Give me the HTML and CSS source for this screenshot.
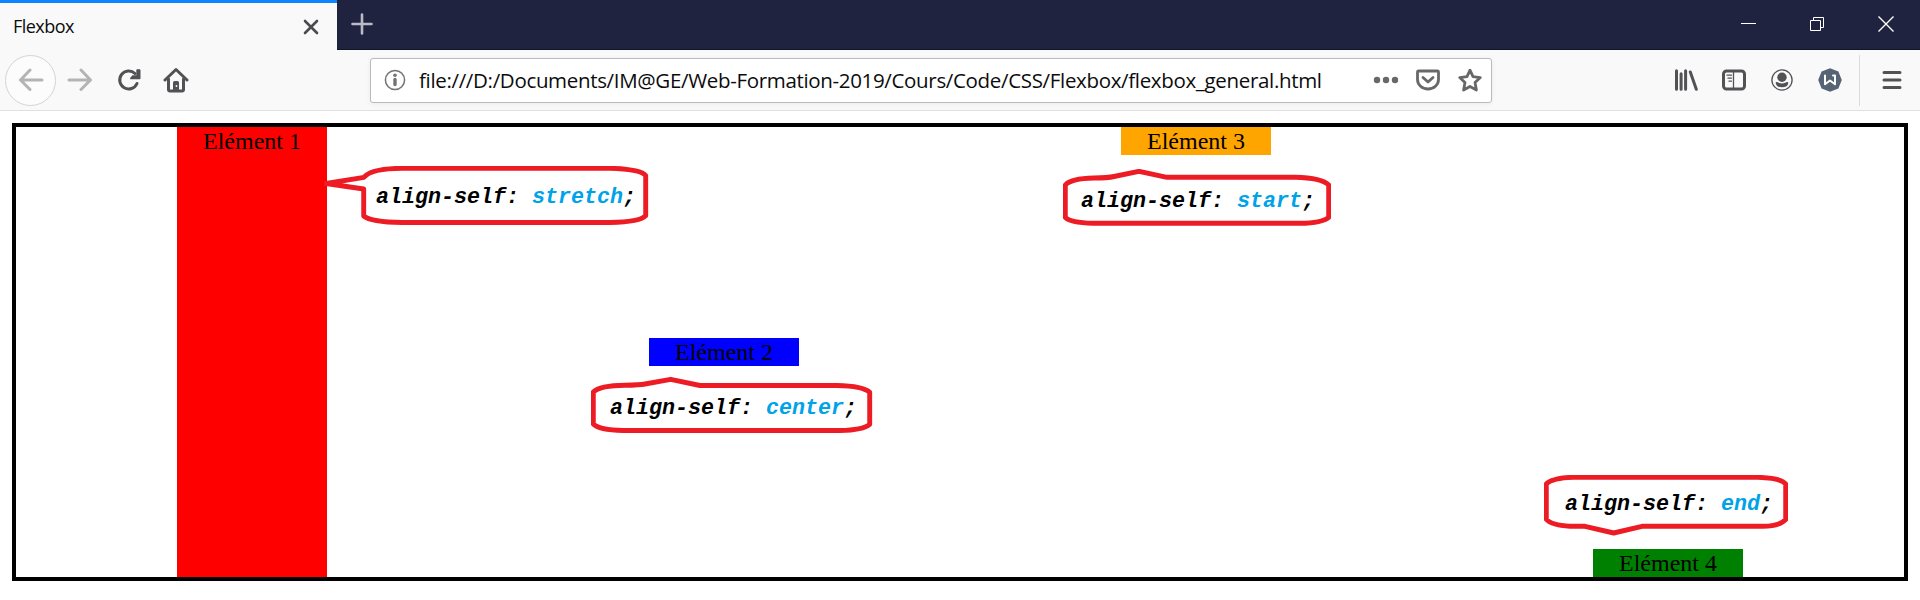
FILE: index.html
```html
<!DOCTYPE html>
<html lang="fr">
<head>
<meta charset="utf-8">
<title>Flexbox</title>
<link rel="stylesheet" href="styles.css">
</head>
<body>
<header class="tabstrip">
  <div class="tab">
    <span class="tab-title">Flexbox</span>
    <svg class="tab-close" width="16" height="16" viewBox="0 0 16 16"><path d="M2 2l12 12M14 2L2 14"/></svg>
  </div>
  <svg class="new-tab" width="22" height="22" viewBox="0 0 22 22"><path d="M11 1.500v19M1.500 11h19"/></svg>
  <div class="window-controls">
    <svg width="69" height="49" viewBox="0 0 69 49"><path d="M28 23.500h15"/></svg>
    <svg width="69" height="49" viewBox="0 0 69 49"><path d="M28.500 20.500h10v10h-10zM31.500 20v-2.500h10v10H39"/></svg>
    <svg width="69" height="49" viewBox="0 0 69 49"><path class="thick" d="M27.500 16.500l15 15M42.500 16.500l-15 15"/></svg>
  </div>
</header>
<nav class="toolbar">
  <div class="nav-buttons">
    <span class="back"><svg width="26" height="24" viewBox="0 0 26 24"><path d="M24 12H2.500M12 2L2.500 12l9.500 9.500"/></svg></span>
    <svg class="faded forward" width="26" height="24" viewBox="0 0 26 24"><path d="M2 12h21.500M14 2l9.500 10L14 21.500"/></svg>
    <svg class="reload" width="24" height="24" viewBox="0 0 24 24"><path d="M20 15.500A9 9 0 1 1 18 5.500"/><path class="fill" d="M22.500 1.200c.7 0 1 .5 1 1v8c0 .6-.4 1-1 1h-8.200c-1.300 0-1.600-1-.8-1.800l2-2.200h3.800V2.200c0-.6.6-1 1-1z"/></svg>
    <svg class="home" width="26" height="26" viewBox="0 0 26 26"><path d="M2 13L13 2.500 24 13M5.500 12v10.500q0 1.500 1.500 1.500h12q1.500 0 1.500-1.500V12"/><path class="fill" d="M10 24v-8.500q0-1.500 1.500-1.500h3q1.500 0 1.500 1.500V24z"/><circle class="knob" cx="13.500" cy="19" r=".9"/></svg>
  </div>
  <div class="urlbar">
    <svg class="info" width="22" height="22" viewBox="0 0 22 22"><circle cx="11" cy="11" r="9.600"/><path class="stem" d="M11 10.500v5"/><circle class="dot" cx="11" cy="6.300" r="1.800"/></svg>
    <span class="url">file:///D:/Documents/IM@GE/Web-Formation-2019/Cours/Code/CSS/Flexbox/flexbox_general.html</span>
    <div class="url-actions">
      <svg width="26" height="26" viewBox="0 0 26 26"><g class="fill"><circle cx="4" cy="13" r="3.200"/><circle cx="13" cy="13" r="3.200"/><circle cx="22" cy="13" r="3.200"/></g></svg>
      <svg width="26" height="26" viewBox="0 0 26 26"><path d="M3.500 4h19q1 0 1 1v7.500a10.500 9.500 0 0 1-21 0V5q0-1 1-1zM8 10.500l5 4.500 5-4.500"/></svg>
      <svg width="26" height="26" viewBox="0 0 26 26"><path d="M13 3.200l3 6.500 7.300.9-5.300 5 1.400 7.400-6.400-3.500-6.400 3.500L8 15.600l-5.300-5 7.300-.9z"/></svg>
    </div>
  </div>
  <div class="tools">
    <svg width="24" height="24" viewBox="0 0 24 24"><path d="M2.500 2.800v18.500M7.100 5.800v15.500M11.600 2.800v18.500M16.300 4l6 17.300"/></svg>
    <svg width="24" height="24" viewBox="0 0 24 24"><rect x="1.500" y="3" width="21" height="18" rx="3"/><path class="fine" d="M11.500 3v18M5 7.200h4.500M6 10.200h3.500M7 13.200h2.500"/></svg>
    <svg width="24" height="24" viewBox="0 0 24 24"><circle class="fine" cx="12" cy="12" r="10.100"/><circle class="fill" cx="12" cy="9.200" r="4.700"/><path class="fill" d="M5.700 15q-.2-1 1-.9 1.300.1 2 .7 3.300 1.500 6.600 0 .7-.6 2-.7 1.200-.1 1 .9-.6 4.300-6.300 4.300T5.700 15z"/></svg>
    <svg width="24" height="24" viewBox="0 0 24 24"><path class="badge" d="M12 .2l8.400 3.400L23.800 12l-3.400 8.400L12 23.800l-8.400-3.400L.2 12l3.400-8.400z"/><path class="mark" d="M7 7.500v8.800l5-3.800 5 3.800V7.500h-2"/></svg>
  </div>
  <div class="menu">
    <svg width="20" height="20" viewBox="0 0 20 20"><path d="M2 2.500h16M2 10h16M2 17.500h16"/></svg>
  </div>
</nav>
<main class="page">
  <section class="container">
    <div class="item item-1">Elément 1</div>
    <div class="item item-2">Elément 2</div>
    <div class="item item-3">Elément 3</div>
    <div class="item item-4">Elément 4</div>
  </section>
  <div class="callout callout-1">
    <svg width="326" height="60" viewBox="324 166 326 60"><path d="M326 183.500L364 177.300Q371 168.500 402 168.300H610Q640 169 645.700 175.500V215.700Q640 222 610 222.500H402Q371 222 363.700 216V189Z"/></svg>
    <code>align-self: <b>stretch</b>;</code>
  </div>
  <div class="callout callout-2">
    <svg width="282" height="58" viewBox="591 376 282 58"><path d="M593.300 392Q600 385.500 625 385.300Q640 385 645 384L670.700 379.300L700 385.500H837Q863 386 869.700 392.300V424.300Q863 430 840 430.500H623Q599 430 593.300 424Z"/></svg>
    <code>align-self: <b>center</b>;</code>
  </div>
  <div class="callout callout-3">
    <svg width="268" height="58" viewBox="1063 169 268 58"><path d="M1065.300 185Q1071 178.500 1094 178Q1108 178 1114 176.500L1139 171.300L1167 177.300H1295Q1322 178 1328.700 185V217.300Q1322 223 1300 223.300H1093Q1070 222.500 1065.300 217.300Z"/></svg>
    <code>align-self: <b>start</b>;</code>
  </div>
  <div class="callout callout-4">
    <svg width="244" height="62" viewBox="1544 475 244 62"><path d="M1546.300 484Q1552 478 1573 477.300H1758Q1781 478 1785.700 484V519.300Q1780 526 1763 526.300H1642L1613.700 533L1585 526.300H1570Q1551 525 1546.300 519.300Z"/></svg>
    <code>align-self: <b>end</b>;</code>
  </div>
</main>
</body>
</html>
```
FILE: styles.css
```css
* { box-sizing: border-box; }
body { margin: 0; height: 600px; overflow: hidden; background: #fff; }
svg { display: block; flex: none; fill: none; stroke-linecap: round; stroke-linejoin: round; }

/* Tabs */
.tabstrip {
  display: flex;
  height: 50px;
  background: #202340;
  border-bottom: 1px solid #121429;
}
.tab {
  display: flex;
  align-items: center;
  justify-content: space-between;
  width: 337px;
  height: 50px;
  padding: 0 18px 0 13px;
  background: #f9f9fa;
  border-top: 3px solid #0a84ff;
}
.tab-title { padding-bottom: 2px; font: 18px/24px "Open Sans", sans-serif; letter-spacing: -0.55px; color: #0c0c0d; }
.tab-close { stroke: #4a4a4f; stroke-width: 2.6; }
.new-tab { margin: 13px 0 0 14px; stroke: #b9bac8; stroke-width: 2.6; }
.window-controls { display: flex; margin-left: auto; }
.window-controls svg { stroke: #fff; stroke-width: 1; stroke-linecap: butt; stroke-linejoin: miter; }
.window-controls .thick { stroke-width: 1.4; }

/* Navigation bar */
.toolbar {
  display: flex;
  align-items: center;
  height: 61px;
  background: #f9f9fa;
  border-bottom: 1px solid #e0e0e1;
}
.toolbar svg { stroke: #525255; stroke-width: 3; }
.toolbar .fill { fill: #525255; stroke: none; }
.nav-buttons { display: flex; align-items: center; width: 370px; padding-left: 5px; }
.back {
  display: flex;
  align-items: center;
  justify-content: center;
  width: 51px;
  height: 51px;
  border: 1px solid #d4d4d5;
  border-radius: 50%;
  background: #fcfcfc;
}
.toolbar .back svg, .toolbar .faded { stroke: #b4b4b5; }
.forward { margin-left: 11px; }
.reload { margin-left: 24px; }
.home { margin-left: 22px; }
.home .knob { fill: #f9f9fa; stroke: none; }
.urlbar {
  display: flex;
  align-items: center;
  width: 1122px;
  height: 45px;
  padding: 0 8px 0 13px;
  background: #fff;
  border: 1px solid #bababb;
  border-radius: 3px;
  box-shadow: 0 1px 5px rgba(0, 0, 0, 0.06);
}
.toolbar .info { stroke: #737373; stroke-width: 1.5; }
.info .stem { stroke-width: 3.4; }
.info .dot { fill: #737373; stroke: none; }
.url {
  margin-left: 13px;
  font: 20.5px/28px "Open Sans", sans-serif;
  letter-spacing: -0.33px;
  white-space: nowrap;
  color: #0c0c0d;
}
.url-actions { display: flex; gap: 16px; margin-left: auto; }
.toolbar .url-actions svg { stroke: #686868; stroke-width: 2.8; }
.toolbar .url-actions .fill { fill: #686868; }
.tools { display: flex; gap: 24px; margin-left: 182px; }
.tools .fine { stroke-width: 1.3; }
.tools .badge { fill: #566475; stroke: none; }
.tools .mark { stroke: #fff; stroke-width: 2; }
.menu {
  display: flex;
  align-items: center;
  height: 51px;
  margin-left: 17px;
  padding-left: 22px;
  border-left: 1px solid #dcdcdd;
}

/* Flexbox demonstration */
.page { position: relative; padding: 12px 12px 0; }
.container {
  display: flex;
  justify-content: space-around;
  height: 458px;
  border: 4px solid #000;
}
.item {
  width: 150px;
  height: 28px;
  text-align: center;
  font: 24px/28px "Liberation Serif", serif;
  color: #000;
}
.item-1 { align-self: stretch; height: auto; background: red; }
.item-2 { align-self: center; background: blue; }
.item-3 { align-self: flex-start; background: orange; }
.item-4 { align-self: flex-end; background: green; }

/* Speech bubbles laid over the demonstration */
.callout { position: absolute; }
.callout svg { stroke: #ed1c24; stroke-width: 4.9; }
.callout code {
  position: absolute;
  font: italic bold 21.67px/24px "Liberation Mono", monospace;
  white-space: pre;
  color: #000;
}
.callout b { color: #00a2e8; }
.callout-1 { left: 324px; top: 55px; }
.callout-1 code { left: 52px; top: 20px; }
.callout-2 { left: 591px; top: 265px; }
.callout-2 code { left: 19px; top: 21px; }
.callout-3 { left: 1063px; top: 58px; }
.callout-3 code { left: 18px; top: 21px; }
.callout-4 { left: 1544px; top: 364px; }
.callout-4 code { left: 21px; top: 18px; }
```
